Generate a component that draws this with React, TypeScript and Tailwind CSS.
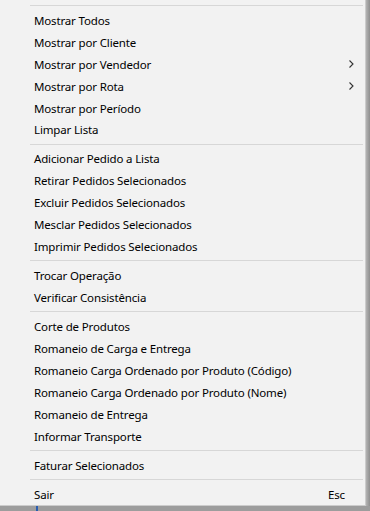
import React from "react";

type Item = { label: string; sub?: boolean; shortcut?: string } | "sep";

const items: Item[] = [
  "sep",
  { label: "Mostrar Todos" },
  { label: "Mostrar por Cliente" },
  { label: "Mostrar por Vendedor", sub: true },
  { label: "Mostrar por Rota", sub: true },
  { label: "Mostrar por Período" },
  { label: "Limpar Lista" },
  "sep",
  { label: "Adicionar Pedido a Lista" },
  { label: "Retirar Pedidos Selecionados" },
  { label: "Excluir Pedidos Selecionados" },
  { label: "Mesclar Pedidos Selecionados" },
  { label: "Imprimir Pedidos Selecionados" },
  "sep",
  { label: "Trocar Operação" },
  { label: "Verificar Consistência" },
  "sep",
  { label: "Corte de Produtos" },
  { label: "Romaneio de Carga e Entrega" },
  { label: "Romaneio Carga Ordenado por Produto (Código)" },
  { label: "Romaneio Carga Ordenado por Produto (Nome)" },
  { label: "Romaneio de Entrega" },
  { label: "Informar Transporte" },
  "sep",
  { label: "Faturar Selecionados" },
  "sep",
  { label: "Sair", shortcut: "Esc" },
];

function Chevron() {
  return (
    <svg width="5" height="8" viewBox="0 0 5 8" className="block">
      <path d="M0.5 0.5 L4 4 L0.5 7.5" fill="none" stroke="#333333" strokeWidth="1.1" />
    </svg>
  );
}

export default function App() {
  return (
    <div
      className="w-[370px] h-[511px] bg-[#a9a9a9] flex flex-col overflow-hidden"
      style={{ fontFamily: '"Noto Sans", "Open Sans", sans-serif' }}
    >
      <div className="flex h-[506px]">
        <div className="w-[366px] h-[506px] bg-[#f2f2f2] border-r border-b border-[#cccccc] pt-[2px] flex flex-col">
          {items.map((it, i) =>
            it === "sep" ? (
              <div key={i} className="h-[7px] flex items-center pl-[30px] pr-[2px]">
                <div className="h-px w-full bg-[#d7d7d7]" />
              </div>
            ) : (
              <div
                key={i}
                className="h-[22px] flex items-center pl-[34px] pr-[11px] pt-px text-[11.5px] tracking-[-0.15px] leading-none text-black"
              >
                <span className="flex-1">{it.label}</span>
                {it.sub && <Chevron />}
                {it.shortcut && <span className="mr-[9px]">{it.shortcut}</span>}
              </div>
            )
          )}
        </div>
        <div className="w-[4px] bg-gradient-to-r from-[#b4b4b4] to-[#8f8f8f]" />
      </div>
      <div className="h-[5px] bg-[#9d9d9d] relative">
        <div className="absolute left-[36px] top-0 w-[2px] h-[5px] bg-[#2a5db0]" />
      </div>
    </div>
  );
}
